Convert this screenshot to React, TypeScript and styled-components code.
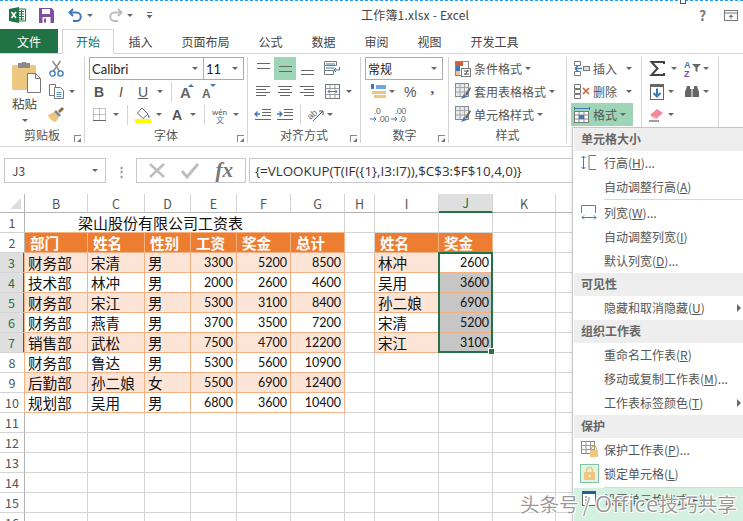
import styled, { createGlobalStyle } from 'styled-components'
import type { ReactNode } from 'react'

const UI = '"Noto Sans CJK SC", "Noto Sans", sans-serif'
const GREEN = '#217346'
const ACTIVE = '#9fd5b7'
const LINE = '#d4d4d4'
const ORANGE = '#f4b183'

const Global = createGlobalStyle`
  html, body { margin: 0; padding: 0; background: #fff; }
  body { font-family: ${UI}; color: #444; }
`

const Page = styled.div`
  position: relative;
  width: 743px;
  height: 521px;
  overflow: hidden;
  background: #fff;
`

/* title bar */
const TitleBar = styled.header`
  height: 28px;
  display: flex;
  align-items: center;
  border-top: 1px dashed #2a9bf0;
`
const QuickAccess = styled.div`
  width: 361px;
  display: flex;
  align-items: center;
  padding-left: 9px;
  box-sizing: border-box;
`
const QatSlot = styled.div<{ $w: number }>`
  width: ${p => p.$w}px;
  display: flex;
  align-items: center;
  gap: 4px;
`
const Title = styled.div`
  flex: 1;
  font-size: 12px;
  color: #444;
  letter-spacing: 0.2px;
  padding-bottom: 2px;
`
const WindowButtons = styled.div`
  width: 44px;
  display: flex;
  align-items: center;
  gap: 18px;
  font-size: 14px;
  font-weight: 700;
  color: #777;
`
const Glyph = styled.svg`
  display: block;
  flex: none;
  overflow: visible;
`

/* tabs */
const TabBar = styled.nav`
  height: 24px;
  display: flex;
  align-items: stretch;
  border-bottom: 1px solid ${LINE};
`
const FileTab = styled.div`
  width: 58px;
  margin-right: 4px;
  background: ${GREEN};
  color: #fff;
  font-size: 12px;
  display: flex;
  align-items: center;
  justify-content: center;
`
const Tab = styled.div<{ $on?: boolean }>`
  padding: 0 ${p => (p.$on ? 13 : 14.5)}px;
  font-size: 12px;
  display: flex;
  align-items: center;
  color: ${p => (p.$on ? GREEN : '#444')};
  ${p => (p.$on ? `border: 1px solid ${LINE}; border-bottom: 1px solid #fff; margin-bottom: -1px;` : '')}
`

/* ribbon */
const Ribbon = styled.div`
  height: 92px;
  display: flex;
  border-bottom: 1px solid ${LINE};
`
const Group = styled.section<{ $w: number }>`
  position: relative;
  width: ${p => p.$w}px;
  box-sizing: border-box;
  margin: 3px 0;
  display: flex;
  flex-direction: column;
  border-right: 1px solid ${LINE};
`
const GroupBody = styled.div`
  height: 69px;
  display: flex;
`
const Stack = styled.div<{ $pad?: number }>`
  display: flex;
  flex-direction: column;
  padding-left: ${p => p.$pad ?? 0}px;
`
const GroupLabel = styled.div`
  flex: 1;
  font-size: 12px;
  color: #555;
  display: flex;
  align-items: center;
  justify-content: center;
`
const Launcher = styled.span`
  position: absolute;
  right: 3px;
  bottom: 1px;
  width: 6px;
  height: 6px;
  border-left: 1px solid #888;
  border-top: 1px solid #888;
  &::after {
    content: '';
    position: absolute;
    right: 0;
    bottom: 0;
    border-style: solid;
    border-width: 0 0 4px 4px;
    border-color: transparent transparent #777 transparent;
  }
`
const Row = styled.div<{ $pad?: number }>`
  height: 23px;
  display: flex;
  align-items: center;
  padding-left: ${p => p.$pad ?? 0}px;
`
const Tool = styled.div<{ $w?: number; $on?: boolean }>`
  width: ${p => (p.$w ? `${p.$w}px` : 'auto')};
  height: 23px;
  flex: none;
  display: flex;
  align-items: center;
  justify-content: center;
  gap: 5px;
  font-family: "Liberation Sans", sans-serif;
  font-size: 14px;
  color: #555;
  background: ${p => (p.$on ? ACTIVE : 'transparent')};
`
const Caret = styled.span`
  flex: none;
  width: 0;
  height: 0;
  border-style: solid;
  border-width: 3px 3px 0 3px;
  border-color: #666 transparent transparent transparent;
`
const Divider = styled.span`
  width: 1px;
  height: 20px;
  flex: none;
  background: ${LINE};
`
const PasteBlock = styled.div`
  width: 48px;
  flex: none;
  padding: 5px 0 0 12px;
  box-sizing: border-box;
  display: flex;
  flex-direction: column;
  align-items: flex-start;
  font-size: 12.5px;
  color: #444;
  & > span:last-child { margin: 6px 0 0 10px; }
`
const PasteText = styled.div`
  margin-top: 1px;
  white-space: nowrap;
`
const Combo = styled.div<{ $w: number; $size?: number; $cjk?: boolean }>`
  width: ${p => p.$w}px;
  height: 23px;
  box-sizing: border-box;
  flex: none;
  border: 1px solid #ababab;
  margin-left: -1px;
  display: flex;
  align-items: center;
  justify-content: space-between;
  padding: 0 5px 0 2px;
  background: #fff;
  font-family: ${p => (p.$cjk ? UI : 'Lato, sans-serif')};
  font-size: ${p => p.$size ?? 12}px;
  color: #222;
`
const Percent = styled.span`
  font-size: 14px;
  color: #555;
  font-family: "Liberation Sans", sans-serif;
`
const Comma = styled.span`
  font-size: 15px;
  font-weight: 700;
  color: #555;
  font-family: "Liberation Serif", serif;
  margin-top: -6px;
`
const ActionText = styled.span`
  font-size: 12px;
  color: #555;
  white-space: nowrap;
  padding-bottom: 1px;
`
const ActionRow = styled.div<{ $pad: number; $w: number; $on?: boolean }>`
  height: 23px;
  width: ${p => p.$w}px;
  box-sizing: border-box;
  padding-left: ${p => p.$pad}px;
  display: flex;
  align-items: center;
  gap: 3px;
  background: ${p => (p.$on ? ACTIVE : 'transparent')};
`
const Gap = styled.span<{ $w: number }>`
  width: ${p => p.$w}px;
  flex: none;
`

/* formula bar */
const FormulaBar = styled.div`
  height: 47px;
  box-sizing: border-box;
  padding: 11px 0 11px 4px;
  display: flex;
  align-items: stretch;
`
const NameBox = styled.div`
  width: 102px;
  box-sizing: border-box;
  border: 1px solid #c8c8c8;
  display: flex;
  align-items: center;
  justify-content: space-between;
  padding: 0 7px;
  font-size: 12px;
  color: #444;
`
const Dots = styled.div`
  width: 30px;
  display: flex;
  align-items: center;
  justify-content: center;
  color: #999;
  font-size: 13px;
  font-weight: 700;
`
const FxBox = styled.div`
  width: 110px;
  box-sizing: border-box;
  border: 1px solid #c8c8c8;
  display: flex;
  align-items: center;
  justify-content: space-around;
  padding: 0 4px;
`
const FxMark = styled.span`
  font-family: "Liberation Serif", serif;
  font-style: italic;
  font-weight: 700;
  font-size: 21px;
  color: #777;
`
const FormulaInput = styled.div`
  flex: 1;
  margin-left: 3px;
  box-sizing: border-box;
  border: 1px solid #c8c8c8;
  border-right: 0;
  display: flex;
  align-items: center;
  padding-left: 5px;
  font-family: "Open Sans", sans-serif;
  font-size: 13.4px;
  color: #333;
  white-space: nowrap;
`

/* sheet */
const Sheet = styled.div`
  position: relative;
  display: grid;
  grid-template-columns: 25px 63px 57px 46px 46px 54px 54px 30px 64px 54px 63px 64px 64px;
  grid-template-rows: 19px;
  grid-auto-rows: 20px;
`
const Corner = styled.div`
  position: relative;
  border-right: 1px solid #b5b5b5;
  border-bottom: 1px solid #b5b5b5;
  &::after {
    content: '';
    position: absolute;
    right: 3px;
    bottom: 3px;
    border-style: solid;
    border-width: 0 0 11px 11px;
    border-color: transparent transparent #dcdcdc transparent;
  }
`
const ColHead = styled.div<{ $on?: boolean }>`
  display: flex;
  align-items: center;
  justify-content: center;
  font-size: 12.5px;
  box-sizing: border-box;
  color: ${p => (p.$on ? GREEN : '#555')};
  background: ${p => (p.$on ? '#dfdfdf' : '#fff')};
  border-right: 1px solid ${LINE};
  border-bottom: ${p => (p.$on ? `2px solid ${GREEN}` : '1px solid #b5b5b5')};
`
const RowHead = styled.div<{ $on?: boolean }>`
  display: flex;
  align-items: center;
  justify-content: center;
  box-sizing: border-box;
  font-size: 12.5px;
  color: ${p => (p.$on ? GREEN : '#555')};
  background: ${p => (p.$on ? '#dfdfdf' : '#fff')};
  border-right: ${p => (p.$on ? `2px solid ${GREEN}` : '1px solid #b5b5b5')};
  border-bottom: 1px solid ${LINE};
`
type Tone = 'plain' | 'head' | 'stripe' | 'white' | 'sel' | 'selTop'
const toneBg: Record<Tone, string> = {
  plain: '#fff',
  head: '#ed7d31',
  stripe: '#fce4d6',
  white: '#fff',
  sel: '#c6c6c6',
  selTop: '#fff',
}
const Cell = styled.div<{ $tone?: Tone; $num?: boolean; $edge?: boolean }>`
  box-sizing: border-box;
  display: flex;
  align-items: center;
  overflow: visible;
  white-space: nowrap;
  padding: 0 3px 0 ${p => (p.$tone === 'head' ? 5 : 3)}px;
  justify-content: ${p => (p.$num ? 'flex-end' : 'flex-start')};
  background: ${p => toneBg[p.$tone ?? 'plain']};
  color: ${p => (p.$tone === 'head' ? '#fff' : '#111')};
  font-family: ${p => (p.$num ? 'Lato, sans-serif' : UI)};
  font-size: ${p => (p.$num ? 12.5 : 14.6)}px;
  font-weight: ${p => (p.$tone === 'head' ? 700 : 400)};
  border-right: 1px solid ${p => (!p.$tone || p.$tone === 'plain' ? LINE : ORANGE)};
  border-bottom: 1px solid ${p => (!p.$tone || p.$tone === 'plain' ? LINE : ORANGE)};
  ${p => (p.$edge ? `box-shadow: -1px 0 0 ${ORANGE};` : '')}
`
const MergedTitle = styled.div`
  grid-column: span 6;
  box-sizing: border-box;
  padding-left: 53px;
  display: flex;
  align-items: center;
  font-size: 15px;
  color: #111;
  border-right: 1px solid ${LINE};
  border-bottom: 1px solid ${ORANGE};
`
const Selection = styled.div`
  position: absolute;
  left: 438px;
  top: 58px;
  width: 55px;
  height: 101px;
  box-sizing: border-box;
  border: 2px solid ${GREEN};
  pointer-events: none;
`
const FillHandle = styled.span`
  position: absolute;
  right: -4px;
  bottom: -4px;
  width: 5px;
  height: 5px;
  background: ${GREEN};
  border: 1px solid #fff;
`

/* menu */
const Menu = styled.div`
  position: absolute;
  left: 572px;
  top: 127px;
  width: 175px;
  height: 400px;
  box-sizing: border-box;
  padding-left: 1px;
  background: #fff;
  border: 1px solid #c6c6c6;
  box-shadow: -1px 1px 3px rgba(0, 0, 0, 0.08);
`
const MenuHead = styled.div`
  height: 23px;
  box-sizing: border-box;
  background: #eeeeee;
  display: flex;
  align-items: center;
  padding: 0 0 2px 7px;
  font-size: 12px;
  font-weight: 700;
  color: #666;
`
const MenuItem = styled.div<{ $hover?: boolean; $tall?: boolean }>`
  position: relative;
  height: ${p => (p.$tall ? 33 : 24)}px;
  display: flex;
  align-items: ${p => (p.$tall ? 'flex-start' : 'center')};
  font-size: 12px;
  color: #555;
  background: ${p => (p.$hover ? '#d3f0e0' : 'transparent')};
  padding: ${p => (p.$tall ? '3px 0 0' : '0 0 2px')};
  box-sizing: border-box;
  white-space: nowrap;
`
const MenuIcon = styled.span`
  width: 30px;
  flex: none;
  display: flex;
  justify-content: center;
`
const LockFrame = styled.span`
  width: 19px;
  height: 19px;
  box-sizing: border-box;
  border: 1px solid #7fc4a0;
  background: #e3f3ea;
  display: flex;
  align-items: center;
  justify-content: center;
`
const SubArrow = styled.span`
  position: absolute;
  right: 5px;
  top: 8px;
  border-style: solid;
  border-width: 4px 0 4px 4px;
  border-color: transparent transparent transparent #666;
`
const MenuRule = styled.div<{ $top: number; $bottom: number }>`
  height: 1px;
  margin: ${p => p.$top}px 0 ${p => p.$bottom}px 30px;
  background: #d8d8d8;
`
const Watermark = styled.div`
  position: absolute;
  left: 520px;
  top: 490px;
  font-size: 19.5px;
  line-height: 26px;
  color: rgba(120, 120, 120, 0.75);
  white-space: nowrap;
  text-shadow: 1px 1px 0 #fff, -1px -1px 0 #fff, 1px -1px 0 #fff, -1px 1px 0 #fff;
  pointer-events: none;
`
const WatermarkLatin = styled.span`
  font-size: 22px;
  letter-spacing: 0.6px;
  font-family: "Open Sans", sans-serif;
`
const SelHandle = styled.span`
  position: absolute;
  left: 680px;
  top: -2px;
  width: 4px;
  height: 4px;
  background: #fff;
  border: 1px solid #555;
`

/* icons */
const Ico = ({ w = 16, h = 16, children }: { w?: number; h?: number; children: ReactNode }) => (
  <Glyph width={w} height={h} viewBox={`0 0 ${w} ${h}`} fill="none">
    {children}
  </Glyph>
)
const Lines = ({ ys, x1 = 1, x2 = 15, color = '#666' }: { ys: number[]; x1?: number; x2?: number; color?: string }) => (
  <>
    {ys.map(y => (
      <path key={y} d={`M${x1} ${y + 0.5}H${x2}`} stroke={color} />
    ))}
  </>
)

const ExcelLogo = () => (
  <Ico w={17} h={16}>
    <path d="M8 2h8.5v12H8z" fill="#fff" stroke="#217346" />
    <path d="M10 4.5h5M10 7h5M10 9.5h5M10 12h5M12.5 3v10" stroke="#217346" />
    <path d="M0 2l10-2v16L0 14z" fill="#217346" />
    <path d="M2.5 5l4.5 6M7 5l-4.5 6" stroke="#fff" strokeWidth="1.6" />
  </Ico>
)
const SaveIcon = () => (
  <Ico w={15} h={15}>
    <path d="M0 0h12.5L15 2.5V15H0z" fill="#7e4f9e" />
    <rect x="3" y="1" width="8" height="5" fill="#fff" />
    <rect x="3.5" y="9" width="8" height="6" fill="#fff" />
    <rect x="5" y="10.5" width="2" height="4" fill="#7e4f9e" />
  </Ico>
)
const UndoIcon = ({ color }: { color: string }) => (
  <Ico w={15} h={14}>
    <path d="M5 1L1.5 4.5 5 8" stroke={color} strokeWidth="2" />
    <path d="M2 4.5h6.5a4.2 4.2 0 0 1 0 8.5H5" stroke={color} strokeWidth="2" />
  </Ico>
)
const RedoIcon = ({ color }: { color: string }) => (
  <Ico w={15} h={14}>
    <path d="M10 1l3.5 3.5L10 8" stroke={color} strokeWidth="2" />
    <path d="M13 4.5H6.5a4.2 4.2 0 0 0 0 8.5H10" stroke={color} strokeWidth="2" />
  </Ico>
)
const CustomizeIcon = () => (
  <Ico w={7} h={8}>
    <path d="M1 1.5h5" stroke="#666" />
    <path d="M0.5 4h6L3.5 7.5z" fill="#666" />
  </Ico>
)
const RibbonModeIcon = () => (
  <Ico w={14} h={11}>
    <rect x="0.5" y="0.5" width="13" height="10" stroke="#777" />
    <path d="M1 3h12" stroke="#777" />
    <path d="M7 4.5l-2.5 2.5h5z" fill="#777" />
    <path d="M7 6v3" stroke="#777" />
  </Ico>
)
const PasteIcon = () => (
  <Ico w={29} h={31}>
    <rect x="0" y="3" width="24" height="25" rx="1.5" fill="#edc77f" />
    <rect x="6" y="1" width="12" height="5" fill="#8a8a8a" />
    <rect x="10" y="0" width="4" height="3" fill="#8a8a8a" />
    <path d="M15.5 11.5h8l5 5v14h-13z" fill="#fff" stroke="#777" />
    <path d="M23.5 11.5v5h5" stroke="#777" />
  </Ico>
)
const CutIcon = () => (
  <Ico w={15} h={16}>
    <path d="M3.5 0l7 10M11.5 0l-7 10" stroke="#888" strokeWidth="1.4" />
    <circle cx="3.5" cy="12.5" r="2.6" stroke="#3f78b5" strokeWidth="1.3" />
    <circle cx="11.5" cy="12.5" r="2.6" stroke="#3f78b5" strokeWidth="1.3" />
  </Ico>
)
const CopyIcon = () => (
  <Ico w={15} h={15}>
    <path d="M0.5 0.5h6v11h-6z" fill="#fff" stroke="#777" />
    <path d="M5.5 3.5h6l3 3v8h-9z" fill="#fff" stroke="#777" />
    <path d="M7.5 8.5h5M7.5 10.5h5M7.5 12.5h5" stroke="#5a8fc5" />
  </Ico>
)
const BrushIcon = () => (
  <Ico w={16} h={15}>
    <path d="M0 8l6-3 5 5-3 5C5 15 1 12 0 8z" fill="#edc77f" />
    <path d="M6 5l2-2 5 5-2 2z" fill="#888" />
    <path d="M10 4l4-4 2 2-4 4z" fill="#8a6a3a" />
  </Ico>
)
const DottedGrid = () => (
  <Ico w={13} h={13}>
    <path d="M0.5 0.5h12v12h-12zM0.5 6.5h12M6.5 0.5v12" stroke="#888" strokeDasharray="1 1" />
    <path d="M0 12.5h13" stroke="#666" />
  </Ico>
)
const FillIcon = () => (
  <Ico w={16} h={16}>
    <path d="M7 1l6 6-5 4.5-5.5-5.5z" fill="#fff" stroke="#666" />
    <path d="M13.5 7.5c1.2 2 1.5 3 .5 3.5-1 0-1.5-1.5-.5-3.5z" fill="#3f78b5" />
    <rect x="0" y="12" width="16" height="4" fill="#ffff00" />
  </Ico>
)
const WenIcon = () => (
  <Ico w={17} h={16}>
    <text x="0" y="7.5" fontSize="8" fontFamily="Lato, sans-serif" fill="#555">wén</text>
    <text x="4" y="15.5" fontSize="8" fontFamily={UI} fill="#3f78b5">文</text>
  </Ico>
)
const FontGrow = ({ up }: { up?: boolean }) => (
  <Ico w={14} h={15}>
    <text x="0" y="14" fontSize={up ? 15 : 12} fontWeight="700" fontFamily="Liberation Sans, sans-serif" fill="#666">A</text>
    <path d={up ? 'M11 0l3 3H8z' : 'M8 0h6l-3 3z'} fill="#3f78b5" />
  </Ico>
)
const AlignIcon = ({ ys, x1, x2 }: { ys: number[]; x1?: number; x2?: number }) => (
  <Ico w={15} h={15}>
    <Lines ys={ys} x1={x1 ?? 1} x2={x2 ?? 15} />
  </Ico>
)
const AlignText = ({ side }: { side: 'l' | 'c' | 'r' }) => (
  <Ico w={15} h={11}>
    {[0, 3, 6, 9].map((y, i) => {
      const short = i % 2 === 1
      const a = side === 'l' ? 0 : side === 'r' ? (short ? 4 : 0) : short ? 2 : 0
      const b = side === 'l' ? (short ? 10 : 14) : side === 'r' ? 14 : short ? 12 : 14
      return <path key={y} d={`M${a} ${y + 0.5}H${b}`} stroke="#666" />
    })}
  </Ico>
)
const WrapIcon = () => (
  <Ico w={17} h={15}>
    <path d="M0.5 0.5h12v4h-12zM0.5 4.5v9h9v-4h-9" stroke="#777" />
    <path d="M2 3h9M2 7h8" stroke="#3f78b5" />
    <path d="M15.5 6v3h-5M12 7l-2 2 2 2" stroke="#3f78b5" />
  </Ico>
)
const MergeIcon = () => (
  <Ico w={15} h={15}>
    <rect x="0.5" y="0.5" width="14" height="14" stroke="#777" />
    <path d="M0.5 4.5h14M0.5 10.5h14M5 .5v4M10 .5v4M5 10.5v4M10 10.5v4" stroke="#999" />
    <path d="M3 7.5h9M3 7.5l2-2M3 7.5l2 2M12 7.5l-2-2M12 7.5l-2 2" stroke="#3f78b5" />
  </Ico>
)
const IndentIcon = ({ rev }: { rev?: boolean }) => (
  <Ico w={16} h={11}>
    <path d="M7 .5h9M7 3.5h9M7 6.5h9M0 10.5h16" stroke="#666" />
    <path d={rev ? 'M0 5h5M2.5 2.5L0 5l2.5 2.5' : 'M0 5h5M2.5 2.5L5 5 2.5 7.5'} stroke="#3f78b5" strokeWidth="1.4" />
  </Ico>
)
const OrientIcon = () => (
  <Ico w={17} h={14}>
    <text x="0" y="10" fontSize="9" fontFamily="Liberation Sans, sans-serif" fill="#666" transform="rotate(-40 4 8)">ab</text>
    <path d="M5 13L15 3M15 3h-4M15 3v4" stroke="#555" />
  </Ico>
)
const CurrencyIcon = () => (
  <Ico w={16} h={15}>
    <rect x="0" y="0" width="3" height="5" fill="#3f78b5" />
    <rect x="5" y="1" width="10" height="4" fill="#6fa8dc" />
    <rect x="1" y="7" width="14" height="3" fill="#edc77f" />
    <rect x="3" y="11" width="12" height="3" fill="#edc77f" />
  </Ico>
)
const DecimalIcon = ({ top, bottom }: { top: string; bottom: string }) => (
  <Ico w={17} h={16}>
    <text x="4" y="7" fontSize="8" fontFamily="Lato, sans-serif" fill="#555">{top}</text>
    <text x="8" y="15" fontSize="8" fontFamily="Lato, sans-serif" fill="#555">{bottom}</text>
    <path d="M0 12h6M4 10l2 2-2 2" stroke="#3f78b5" />
  </Ico>
)
const CondIcon = () => (
  <Ico w={16} h={16}>
    <rect x="0" y="0" width="8" height="5" fill="#d0603a" />
    <rect x="0" y="5" width="5" height="5" fill="#3f78b5" />
    <rect x="0" y="10" width="5" height="4" fill="#edc77f" />
    <rect x="0.5" y="0.5" width="13" height="14" stroke="#888" />
    <rect x="6.5" y="7.5" width="9" height="8" fill="#fff" stroke="#777" />
    <path d="M9 10h5M9 13h5M13 9l-3 5" stroke="#555" />
  </Ico>
)
const TableBrush = () => (
  <Ico w={16} h={17}>
    <rect x="0.5" y="0.5" width="13" height="13" fill="#e6e9f0" stroke="#888" />
    <path d="M0.5 4.5h13M0.5 9h13M5 .5v13M9.5 .5v13" stroke="#a5a5a5" />
    <path d="M6 16l3-5 3 3z" fill="#3f78b5" />
    <path d="M10 11l5-7 1 1-4 8z" fill="#666" />
  </Ico>
)
const CellInsert = () => (
  <Ico w={16} h={15}>
    <path d="M.5.5h6v4h-6zM.5 10.5h6v4h-6z" stroke="#777" />
    <rect x="9.5" y="5.5" width="6" height="4" fill="#cfe0f2" stroke="#777" />
    <path d="M1 7.5h7M1 7.5l3-3M1 7.5l3 3" stroke="#3f78b5" strokeWidth="1.4" />
  </Ico>
)
const CellDelete = () => (
  <Ico w={16} h={15}>
    <path d="M.5.5h6v4h-6zM.5 10.5h6v4h-6zM.5 5.5h6v4h-6z" stroke="#777" />
    <path d="M9 4l6 6M15 4l-6 6" stroke="#d0603a" strokeWidth="1.6" />
  </Ico>
)
const CellFormat = () => (
  <Ico w={16} h={16}>
    <path d="M.5 1.5h15M.5 0v3M15.5 0v3" stroke="#3f78b5" />
    <rect x="0.5" y="4.5" width="14" height="11" fill="#fff" stroke="#777" />
    <path d="M.5 8h14M.5 12h14M5 4.5v11M10 4.5v11" stroke="#888" />
    <rect x="5" y="8" width="5" height="4" fill="#3f78b5" />
  </Ico>
)
const SigmaIcon = () => (
  <Ico w={15} h={15}>
    <path d="M14 3V1H1.5l6 6.5-6 6.5H14v-2" stroke="#444" strokeWidth="2" />
  </Ico>
)
const SortIcon = () => (
  <Ico w={17} h={17}>
    <text x="0" y="8" fontSize="9" fontWeight="700" fontFamily="Liberation Sans, sans-serif" fill="#3f78b5">A</text>
    <text x="0" y="17" fontSize="9" fontWeight="700" fontFamily="Liberation Sans, sans-serif" fill="#7e4f9e">Z</text>
    <path d="M8 4h9l-3.5 3.5V12l-2-1V7.5z" fill="#666" />
  </Ico>
)
const FillDown = () => (
  <Ico w={14} h={16}>
    <rect x="0.5" y="0.5" width="13" height="15" fill="#fff" stroke="#666" />
    <rect x="0" y="0" width="14" height="3" fill="#666" />
    <path d="M7 4.5v8M3.5 9L7 12.5 10.5 9" stroke="#3f78b5" strokeWidth="2" />
  </Ico>
)
const BinocularsIcon = () => (
  <Ico w={16} h={14}>
    <path d="M3 1h3v3h1.5v8H1V7zM13 1h-3v3H8.5v8H15V7z" fill="#666" />
  </Ico>
)
const EraserIcon = () => (
  <Ico w={16} h={14}>
    <path d="M1 7l7-6 6 4-7 6z" fill="#f08a9a" />
    <path d="M1 7l3 4h3l1-1z" fill="#f7c4cc" />
    <path d="M0 13h10" stroke="#777" strokeWidth="1.4" />
  </Ico>
)
const RowHeightIcon = () => (
  <Ico w={16} h={15}>
    <path d="M2.5 1v13M.5 3l2-2 2 2M.5 12l2 2 2-2" stroke="#3f78b5" />
    <path d="M15 .5H8v14h7" stroke="#777" />
  </Ico>
)
const ColWidthIcon = () => (
  <Ico w={16} h={15}>
    <path d="M.5 8V.5h14V8" stroke="#777" />
    <path d="M1 12.5h14M3 10.5l-2 2 2 2M13 10.5l2 2-2 2" stroke="#3f78b5" />
  </Ico>
)
const ProtectIcon = () => (
  <Ico w={17} h={16}>
    <rect x="0.5" y="0.5" width="13" height="12" fill="#fff" stroke="#888" />
    <path d="M.5 4.5h13M.5 8.5h13M5 .5v12M9.5 .5v12" stroke="#999" />
    <rect x="9" y="9" width="8" height="7" fill="#edc77f" />
    <path d="M10.5 9V7.5a2.5 2.5 0 0 1 5 0V9" stroke="#c9a45a" />
  </Ico>
)
const LockIcon = () => (
  <Ico w={11} h={13}>
    <rect x="0" y="5" width="11" height="8" rx="1" fill="#edc77f" />
    <path d="M2.5 5V3.5a3 3 0 0 1 6 0V5" stroke="#edc77f" strokeWidth="1.6" />
    <circle cx="5.5" cy="9" r="1" fill="#fff" />
  </Ico>
)
const FormatCellsIcon = () => (
  <Ico w={14} h={15}>
    <rect x="0.5" y="2.5" width="13" height="12" fill="#fff" stroke="#666" />
    <rect x="0" y="0" width="14" height="3" fill="#2a5a9a" />
    <path d="M3 6h2M3 9h2M3 12h2" stroke="#555" />
  </Ico>
)

/* data */
const columns = ['B', 'C', 'D', 'E', 'F', 'G', 'H', 'I', 'J', 'K', 'L', 'M']
const headers = ['部门', '姓名', '性别', '工资', '奖金', '总计']
const staff = [
  ['财务部', '宋清', '男', '3300', '5200', '8500'],
  ['技术部', '林冲', '男', '2000', '2600', '4600'],
  ['财务部', '宋江', '男', '5300', '3100', '8400'],
  ['财务部', '燕青', '男', '3700', '3500', '7200'],
  ['销售部', '武松', '男', '7500', '4700', '12200'],
  ['财务部', '鲁达', '男', '5300', '5600', '10900'],
  ['后勤部', '孙二娘', '女', '5500', '6900', '12400'],
  ['规划部', '吴用', '男', '6800', '3600', '10400'],
]
const lookup = [
  ['林冲', '2600'],
  ['吴用', '3600'],
  ['孙二娘', '6900'],
  ['宋清', '5200'],
  ['宋江', '3100'],
]

const Blanks = ({ n, prefix }: { n: number; prefix: string }) => (
  <>
    {Array.from({ length: n }, (_, i) => (
      <Cell key={prefix + i} />
    ))}
  </>
)

const App = () => (
  <Page>
    <Global />
    <TitleBar>
      <SelHandle />
      <QuickAccess>
        <QatSlot $w={30}><ExcelLogo /></QatSlot>
        <QatSlot $w={29}><SaveIcon /></QatSlot>
        <QatSlot $w={40}><UndoIcon color="#3f78b5" /><Caret /></QatSlot>
        <QatSlot $w={38}><RedoIcon color="#bdbdbd" /><Caret /></QatSlot>
        <QatSlot $w={20}><CustomizeIcon /></QatSlot>
      </QuickAccess>
      <Title>工作簿1.xlsx - Excel</Title>
      <WindowButtons>?<RibbonModeIcon /></WindowButtons>
    </TitleBar>

    <TabBar>
      <FileTab>文件</FileTab>
      <Tab $on>开始</Tab>
      <Tab>插入</Tab>
      <Tab>页面布局</Tab>
      <Tab>公式</Tab>
      <Tab>数据</Tab>
      <Tab>审阅</Tab>
      <Tab>视图</Tab>
      <Tab>开发工具</Tab>
    </TabBar>

    <Ribbon>
      <Group $w={85}>
        <GroupBody>
          <PasteBlock>
            <PasteIcon />
            <PasteText>粘贴</PasteText>
            <Caret />
          </PasteBlock>
          <Stack>
            <Row><Tool $w={16}><CutIcon /></Tool></Row>
            <Row><Tool $w={16}><CopyIcon /></Tool><Gap $w={5} /><Caret /></Row>
            <Row><Tool $w={16}><BrushIcon /></Tool></Row>
          </Stack>
        </GroupBody>
        <GroupLabel>剪贴板</GroupLabel>
        <Launcher />
      </Group>

      <Group $w={163}>
        <GroupBody>
          <Stack $pad={5}>
            <Row>
              <Combo $w={115} $size={13}>Calibri<Caret /></Combo>
              <Combo $w={41} $size={13}>11<Caret /></Combo>
            </Row>
            <Row $pad={2}>
              <Tool $w={14}><b>B</b></Tool>
              <Gap $w={8} />
              <Tool $w={14}><i>I</i></Tool>
              <Gap $w={8} />
              <Tool $w={14}><u>U</u></Tool>
              <Gap $w={7} />
              <Caret />
              <Gap $w={8} />
              <Divider />
              <Gap $w={8} />
              <FontGrow up />
              <Gap $w={8} />
              <FontGrow />
            </Row>
            <Row $pad={3}>
              <DottedGrid />
              <Gap $w={7} />
              <Caret />
              <Gap $w={8} />
              <Divider />
              <Gap $w={7} />
              <FillIcon />
              <Gap $w={5} />
              <Caret />
              <Gap $w={9} />
              <Tool $w={12}><b>A</b></Tool>
              <Gap $w={7} />
              <Caret />
              <Gap $w={8} />
              <Divider />
              <Gap $w={7} />
              <WenIcon />
              <Gap $w={4} />
              <Caret />
            </Row>
          </Stack>
        </GroupBody>
        <GroupLabel>字体</GroupLabel>
        <Launcher />
      </Group>

      <Group $w={113}>
        <GroupBody>
          <Stack $pad={4}>
            <Row>
              <Tool $w={22}><AlignIcon ys={[2, 7]} x1={1} x2={14} /></Tool>
              <Tool $w={22} $on><AlignIcon ys={[5, 10]} x1={1} x2={14} /></Tool>
              <Tool $w={22}><AlignIcon ys={[9, 13]} x1={1} x2={14} /></Tool>
              <Gap $w={6} />
              <Tool $w={17}><WrapIcon /></Tool>
            </Row>
            <Row>
              <Tool $w={22}><AlignText side="l" /></Tool>
              <Tool $w={22}><AlignText side="c" /></Tool>
              <Tool $w={22}><AlignText side="r" /></Tool>
              <Gap $w={6} />
              <Tool $w={17}><MergeIcon /></Tool>
              <Gap $w={5} />
              <Caret />
            </Row>
            <Row>
              <Tool $w={22}><IndentIcon rev /></Tool>
              <Tool $w={22}><IndentIcon /></Tool>
              <Gap $w={4} />
              <Divider />
              <Gap $w={7} />
              <OrientIcon />
              <Gap $w={2} />
              <Caret />
            </Row>
          </Stack>
        </GroupBody>
        <GroupLabel>对齐方式</GroupLabel>
        <Launcher />
      </Group>

      <Group $w={88}>
        <GroupBody>
          <Stack $pad={5}>
            <Row><Combo $w={78} $cjk>常规<Caret /></Combo></Row>
            <Row $pad={5}>
              <CurrencyIcon />
              <Gap $w={2} />
              <Caret />
              <Gap $w={9} />
              <Percent>%</Percent>
              <Gap $w={14} />
              <Comma>,</Comma>
            </Row>
            <Row $pad={4}>
              <DecimalIcon top=".0" bottom=".00" />
              <Gap $w={4} />
              <DecimalIcon top=".00" bottom=".0" />
            </Row>
          </Stack>
        </GroupBody>
        <GroupLabel>数字</GroupLabel>
        <Launcher />
      </Group>

      <Group $w={118}>
        <GroupBody>
          <Stack>
            <ActionRow $pad={6} $w={117}><CondIcon /><ActionText>条件格式</ActionText><Caret /></ActionRow>
            <ActionRow $pad={6} $w={117}><TableBrush /><ActionText>套用表格格式</ActionText><Caret /></ActionRow>
            <ActionRow $pad={6} $w={117}><TableBrush /><ActionText>单元格样式</ActionText><Caret /></ActionRow>
          </Stack>
        </GroupBody>
        <GroupLabel>样式</GroupLabel>
      </Group>

      <Group $w={75}>
        <GroupBody>
          <Stack $pad={4}>
            <ActionRow $pad={3} $w={62}><CellInsert /><ActionText>插入</ActionText><Gap $w={3} /><Caret /></ActionRow>
            <ActionRow $pad={3} $w={62}><CellDelete /><ActionText>删除</ActionText><Gap $w={3} /><Caret /></ActionRow>
            <ActionRow $pad={3} $w={62} $on><CellFormat /><ActionText>格式</ActionText><Caret /></ActionRow>
          </Stack>
        </GroupBody>
      </Group>

      <Group $w={77}>
        <GroupBody>
          <Stack $pad={7}>
            <Row>
              <Tool $w={16}><SigmaIcon /></Tool>
              <Gap $w={6} />
              <Caret />
              <Gap $w={7} />
              <SortIcon />
              <Gap $w={2} />
              <Caret />
            </Row>
            <Row>
              <Tool $w={16}><FillDown /></Tool>
              <Gap $w={3} />
              <Caret />
              <Gap $w={10} />
              <BinocularsIcon />
              <Gap $w={3} />
              <Caret />
            </Row>
            <Row>
              <Tool $w={16}><EraserIcon /></Tool>
              <Gap $w={3} />
              <Caret />
            </Row>
          </Stack>
        </GroupBody>
      </Group>
    </Ribbon>

    <FormulaBar>
      <NameBox>J3<Caret /></NameBox>
      <Dots>⋮</Dots>
      <FxBox>
        <Ico w={16} h={15}><path d="M1 1l14 13M15 1L1 14" stroke="#bdbdbd" strokeWidth="2.4" /></Ico>
        <Ico w={18} h={15}><path d="M1 8l5 6L17 1" stroke="#bdbdbd" strokeWidth="3" /></Ico>
        <FxMark>fx</FxMark>
      </FxBox>
      <FormulaInput>{'{=VLOOKUP(T(IF({1},I3:I7)),$C$3:$F$10,4,0)}'}</FormulaInput>
    </FormulaBar>

    <Sheet>
      <Corner />
      {columns.map(c => <ColHead key={c} $on={c === 'J'}>{c}</ColHead>)}

      <RowHead>1</RowHead>
      <MergedTitle>梁山股份有限公司工资表</MergedTitle>
      <Blanks n={6} prefix="r1" />

      <RowHead>2</RowHead>
      {headers.map(h => <Cell key={h} $tone="head">{h}</Cell>)}
      <Cell />
      <Cell $tone="head">姓名</Cell>
      <Cell $tone="head">奖金</Cell>
      <Blanks n={3} prefix="r2" />

      {staff.map((row, i) => {
        const tone: Tone = i % 2 === 0 ? 'stripe' : 'white'
        const match = lookup[i]
        return [
          <RowHead key={`h${i}`} $on={i < 5}>{i + 3}</RowHead>,
          ...row.map((v, j) => (
            <Cell key={`c${i}-${j}`} $tone={tone} $num={j > 2} $edge={j === 0}>{v}</Cell>
          )),
          <Cell key={`h-${i}`} />,
          match ? <Cell key={`i${i}`} $tone={tone} $edge>{match[0]}</Cell> : <Cell key={`i${i}`} />,
          match ? <Cell key={`j${i}`} $tone={i === 0 ? 'selTop' : 'sel'} $num>{match[1]}</Cell> : <Cell key={`j${i}`} />,
          <Blanks key={`b${i}`} n={3} prefix={`r${i}`} />,
        ]
      })}

      {[11, 12, 13, 14, 15, 16, 17].map(n => [
        <RowHead key={`h${n}`}>{n}</RowHead>,
        <Blanks key={`b${n}`} n={12} prefix={`e${n}`} />,
      ])}

      <Selection><FillHandle /></Selection>
    </Sheet>

    <Menu>
      <MenuHead>单元格大小</MenuHead>
      <MenuItem><MenuIcon><RowHeightIcon /></MenuIcon>行高(<u>H</u>)...</MenuItem>
      <MenuItem><MenuIcon />自动调整行高(<u>A</u>)</MenuItem>
      <MenuRule $top={0} $bottom={1} />
      <MenuItem><MenuIcon><ColWidthIcon /></MenuIcon>列宽(<u>W</u>)...</MenuItem>
      <MenuItem><MenuIcon />自动调整列宽(<u>I</u>)</MenuItem>
      <MenuItem><MenuIcon />默认列宽(<u>D</u>)...</MenuItem>
      <MenuHead>可见性</MenuHead>
      <MenuItem><MenuIcon />隐藏和取消隐藏(<u>U</u>)<SubArrow /></MenuItem>
      <MenuHead>组织工作表</MenuHead>
      <MenuItem><MenuIcon />重命名工作表(<u>R</u>)</MenuItem>
      <MenuItem><MenuIcon />移动或复制工作表(<u>M</u>)...</MenuItem>
      <MenuItem><MenuIcon />工作表标签颜色(<u>T</u>)<SubArrow /></MenuItem>
      <MenuHead>保护</MenuHead>
      <MenuItem><MenuIcon><ProtectIcon /></MenuIcon>保护工作表(<u>P</u>)...</MenuItem>
      <MenuItem><MenuIcon><LockFrame><LockIcon /></LockFrame></MenuIcon>锁定单元格(<u>L</u>)</MenuItem>
      <MenuRule $top={1} $bottom={0} />
      <MenuItem $hover $tall><MenuIcon><FormatCellsIcon /></MenuIcon>设置单元格格式(<u>E</u>)...</MenuItem>
    </Menu>

    <Watermark>头条号 / <WatermarkLatin>Office</WatermarkLatin>技巧共享</Watermark>
  </Page>
)

export default App
